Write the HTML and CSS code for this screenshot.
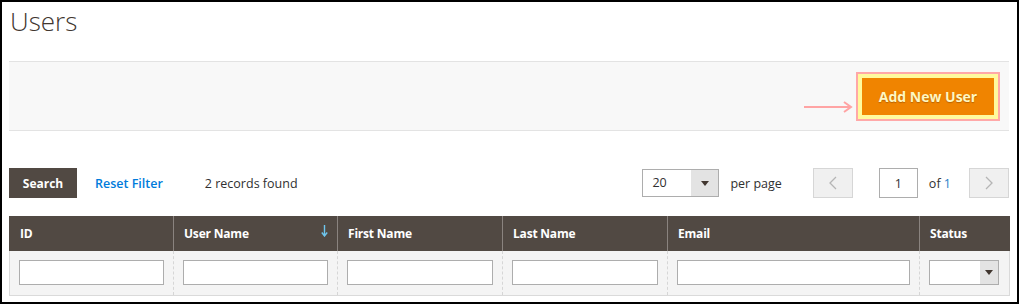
FILE: index.html
```html
<!DOCTYPE html>
<html lang="en">
<head>
<meta charset="utf-8">
<title>Users</title>
<link rel="stylesheet" href="styles.css">
</head>
<body>
<div class="frame">
  <h1 class="page-title">Users</h1>

  <div class="actions-panel">
    <svg class="annot-arrow" width="49" height="12" viewBox="0 0 49 12" aria-hidden="true">
      <path d="M0 6 H47 M40 1 L47 6 L40 11" fill="none" stroke="#ffa4a4" stroke-width="2"/>
    </svg>
    <span class="highlight"><button class="btn-primary">Add New User</button></span>
  </div>

  <div class="toolbar">
    <button class="btn-search">Search</button>
    <a class="reset-link" href="#">Reset Filter</a>
    <span class="records">2 records found</span>
    <div class="pager">
      <div class="limit-select">
        <span class="limit-value">20</span>
        <span class="select-arrow"><span class="tri"></span></span>
      </div>
      <span class="per-page">per page</span>
      <button class="page-btn prev" aria-label="Previous">
        <svg width="8" height="14" viewBox="0 0 8 14"><path d="M7 1 L1 7 L7 13" fill="none" stroke="#b5b5b5" stroke-width="1.3"/></svg>
      </button>
      <input class="page-input" type="text" value="1">
      <span class="of-pages">of <span class="total">1</span></span>
      <button class="page-btn next" aria-label="Next">
        <svg width="8" height="14" viewBox="0 0 8 14"><path d="M1 1 L7 7 L1 13" fill="none" stroke="#b5b5b5" stroke-width="1.3"/></svg>
      </button>
    </div>
  </div>

  <table class="grid">
    <colgroup>
      <col class="c-id"><col class="c-user"><col class="c-first"><col class="c-last"><col class="c-email"><col class="c-status">
    </colgroup>
    <thead>
      <tr class="head-row">
        <th>ID</th>
        <th class="sorted">User Name
          <svg class="sort-arrow" width="7" height="12" viewBox="0 0 7 12"><path d="M3.5 0 V10 M0.8 7.5 L3.5 11 L6.2 7.5" fill="none" stroke="#6ec6ee" stroke-width="1.4"/></svg>
        </th>
        <th>First Name</th>
        <th>Last Name</th>
        <th>Email</th>
        <th>Status</th>
      </tr>
      <tr class="filter-row">
        <td><input class="filter-input" type="text"></td>
        <td><input class="filter-input" type="text"></td>
        <td><input class="filter-input" type="text"></td>
        <td><input class="filter-input" type="text"></td>
        <td><input class="filter-input" type="text"></td>
        <td><div class="status-select"><span class="select-arrow small"><span class="tri"></span></span></div></td>
      </tr>
    </thead>
  </table>
</div>
</body>
</html>
```

FILE: styles.css
```css
* { box-sizing: border-box; }

html, body {
  margin: 0;
  padding: 0;
  background: #fff;
}

body {
  font-family: "Open Sans", "Liberation Sans", Arial, sans-serif;
  color: #303030;
  font-size: 12.5px;
}

.frame {
  width: 1019px;
  height: 304px;
  border: 2px solid #000;
  padding: 0 8px 0 7px;
  overflow: hidden;
}

.page-title {
  margin: 0;
  padding: 1px 0 0 1px;
  font-size: 26px;
  font-weight: 300;
  line-height: 36px;
  color: #41362f;
}

/* actions panel */
.actions-panel {
  margin-top: 22px;
  height: 70px;
  background: #f8f8f8;
  border-top: 1px solid #e3e3e3;
  border-bottom: 1px solid #e3e3e3;
  display: flex;
  justify-content: flex-end;
  align-items: center;
  padding-right: 9px;
}

.annot-arrow {
  margin-top: 22px;
  margin-right: 3px;
}

.highlight {
  display: inline-flex;
  border: 2px solid #ffa8a8;
}

.btn-primary {
  font-family: inherit;
  background: #f08400;
  border: 4px solid #fffa9e;
  color: #fff7c2;
  font-size: 14px;
  font-weight: 700;
  height: 45px;
  width: 140px;
  padding: 0;
  text-shadow: 0 1px 1px rgba(120, 60, 0, 0.45);
  cursor: pointer;
}

/* toolbar */
.toolbar {
  margin-top: 37px;
  height: 30px;
  display: flex;
  align-items: center;
}

.btn-search {
  font-family: inherit;
  height: 30px;
  width: 68px;
  padding: 0;
  background: #514943;
  border: none;
  color: #fff;
  font-size: 12px;
  font-weight: 700;
}

.reset-link {
  margin-left: 18px;
  color: #007bdb;
  font-weight: 600;
  text-decoration: none;
}

.records {
  margin-left: 42px;
  color: #303030;
}

.pager {
  margin-left: auto;
  display: flex;
  align-items: center;
  height: 30px;
}

.limit-select {
  width: 77px;
  height: 28px;
  border: 1px solid #adadad;
  display: flex;
  align-items: stretch;
  background: #fff;
}

.limit-value {
  flex: 1;
  padding-left: 9px;
  line-height: 26px;
  color: #303030;
}

.select-arrow {
  width: 27px;
  background: #e3e3e3;
  display: flex;
  align-items: center;
  justify-content: center;
}

.select-arrow.small {
  width: 18px;
}

.tri {
  width: 0;
  height: 0;
  border-left: 4px solid transparent;
  border-right: 4px solid transparent;
  border-top: 5px solid #41362f;
}

.per-page {
  margin-left: 11px;
}

.page-btn {
  width: 40px;
  height: 30px;
  background: #f0f0f0;
  border: 1px solid #d6d6d6;
  display: flex;
  align-items: center;
  justify-content: center;
  padding: 0;
}

.prev { margin-left: 31px; }
.next { margin-left: 18px; }

.page-input {
  margin-left: 26px;
  width: 39px;
  height: 30px;
  border: 1px solid #adadad;
  text-align: center;
  font-family: inherit;
  font-size: 12.5px;
  color: #303030;
  padding: 0;
}

.of-pages {
  margin-left: 11px;
}

.of-pages .total {
  color: #1f7ec8;
}

/* grid */
.grid {
  margin-top: 18px;
  width: 1000px;
  border-collapse: collapse;
  table-layout: fixed;
}

.c-id { width: 164px; }
.c-user { width: 164px; }
.c-first { width: 165px; }
.c-last { width: 165px; }
.c-email { width: 252px; }
.c-status { width: 90px; }

.head-row th {
  background: #514943;
  color: #fff;
  font-weight: 700;
  font-size: 12px;
  text-align: left;
  height: 35px;
  padding: 0 10px;
  border-left: 1px solid #8a837f;
  border-right: 1px solid #8a837f;
  position: relative;
  letter-spacing: -0.2px;
}

.head-row th:first-child { border-left-color: #514943; }
.head-row th:last-child { border-right-color: #514943; }

.sort-arrow {
  position: absolute;
  right: 9px;
  top: 9px;
}

.filter-row td {
  background: #f4f4f4;
  padding: 9px;
  border-left: 1px dashed #d6d6d6;
  border-right: 1px dashed #d6d6d6;
  border-bottom: 1px solid #dadada;
  height: 44px;
}

.filter-row td:first-child { border-left: 1px solid #dadada; }
.filter-row td:last-child { border-right: 1px solid #dadada; }

.filter-input {
  display: block;
  width: 100%;
  height: 25px;
  border: 1px solid #adadad;
  background: #fff;
  padding: 0 6px;
  font-family: inherit;
}

.status-select {
  width: 70px;
  height: 25px;
  border: 1px solid #adadad;
  background: #fff;
  display: flex;
  justify-content: flex-end;
}
```
